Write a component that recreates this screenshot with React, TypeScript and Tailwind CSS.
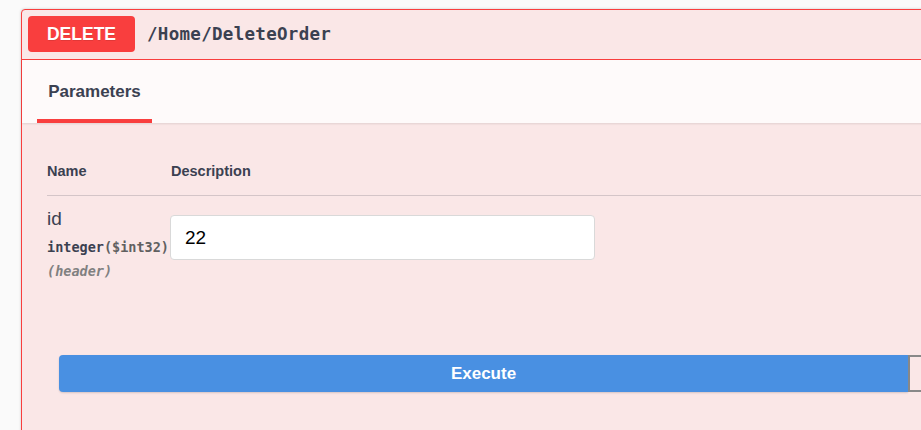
import React from "react";

const mono = "font-['DejaVu_Sans_Mono','Liberation_Mono',monospace]";
const sans = "font-['Liberation_Sans',Arial,sans-serif]";

const App = () => {
  return (
    <div className={`w-[921px] h-[430px] overflow-hidden bg-[#fafafa] pt-[9px] pl-[21px] ${sans}`}>
      <div className="w-[960px] h-[460px] border border-[#f93e3e] rounded-tl-[4px] bg-[#fae7e7] shadow-[0_0_3px_rgba(0,0,0,0.19)]">
        {/* Summary */}
        <div className="flex items-center h-[50px] px-[6px] pb-[1px] border-b border-[#f93e3e]">
          <span className="w-[107px] h-[36px] rounded-[4px] bg-[#f93e3e] text-white font-bold text-[17.5px] flex items-center justify-center [text-shadow:0_1px_0_rgba(0,0,0,0.1)]">
            DELETE
          </span>
          <span className={`ml-[12px] ${mono} text-[17.5px] font-semibold text-[#3b4151] tracking-[0.3px]`}>
            /Home/DeleteOrder
          </span>
        </div>

        {/* Tab header */}
        <div className="h-[63px] bg-white/80 shadow-[0_1px_2px_rgba(0,0,0,0.1)] flex">
          <div className="ml-[15px] w-[115px] flex flex-col items-center">
            <span className="mt-[19px] text-[17px] font-bold text-[#3b4151]">Parameters</span>
            <span className="mt-[14px] w-full h-[4px] bg-[#f93e3e]" />
          </div>
        </div>

        {/* Parameters */}
        <div className="pl-[25px] pt-[39px]">
          <div className="flex leading-[18px] pb-[15px] border-b border-[#3b4151]/20 text-[14.5px] font-bold text-[#3b4151]">
            <span className="w-[124px]">Name</span>
            <span>Description</span>
          </div>
          <div className="flex pt-[11px]">
            <div className="w-[123px] flex flex-col text-[#3b4151]">
              <span className="text-[19px] leading-[24px]">id</span>
              <span className={`${mono} text-[13.5px] font-bold leading-[18px] mt-[7px] whitespace-nowrap`}>
                integer<span className="text-[#606060]">($int32)</span>
              </span>
              <span className={`${mono} text-[13.5px] italic font-semibold text-[#808080] leading-[18px] mt-[6px]`}>
                (header)
              </span>
            </div>
            <input
              readOnly
              value="22"
              className="mt-[8px] w-[425px] h-[45px] rounded-[4px] border border-[#d9d9d9] bg-white px-[14px] text-[19px] text-black outline-none"
            />
          </div>
        </div>

        {/* Execute */}
        <div className="flex pl-[37px] mt-[75px]">
          <button className="w-[849px] h-[37px] rounded-l-[4px] bg-[#4990e2] text-white font-bold text-[17px] shadow-[0_1px_2px_rgba(0,0,0,0.15)]">
            Execute
          </button>
          <button className="w-[60px] h-[37px] border-2 border-[#888] bg-transparent" />
        </div>
      </div>
    </div>
  );
};

export default App;
